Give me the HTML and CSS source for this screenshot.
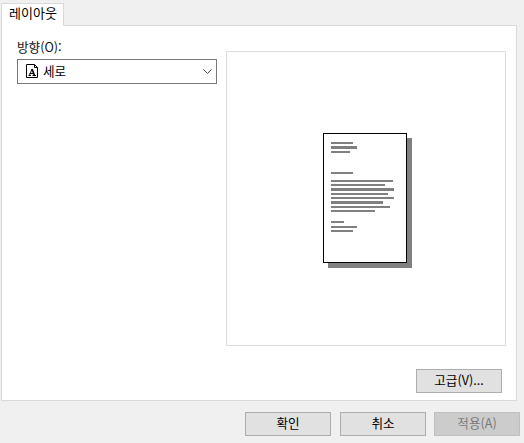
FILE: index.html
```html
<!DOCTYPE html>
<html lang="ko">
<head>
<meta charset="utf-8">
<title>레이아웃</title>
<link rel="stylesheet" href="styles.css">
</head>
<body>
<div class="dialog">
  <div class="tabs"><div class="tab">레이아웃</div></div>
  <div class="panel">
    <div class="main">
      <div class="left">
        <label class="label">방향(O):</label>
        <div class="combo">
          <svg class="doc" width="14" height="15" viewBox="0 0 14 15">
            <path d="M1.5.5H9.5L12.5 3.5V13.5H1.5Z" fill="#fff" stroke="#000"/>
            <path d="M9.5.5V3.5H12.5" fill="none" stroke="#000"/>
            <path d="M3.5 11.5H6M7.5 11.5H11M4.5 9.5H9" fill="none" stroke="#000"/>
            <path d="M4.6 11.2L7 5" fill="none" stroke="#000"/>
            <path d="M7 5L9.4 11.2" fill="none" stroke="#000" stroke-width="1.6"/>
          </svg>
          <span class="combo-text">세로</span>
          <svg class="chev" width="9" height="5" viewBox="0 0 9 5"><path d="M.4.4L4.5 4.4L8.6.4" fill="none" stroke="#444" stroke-width="1"/></svg>
        </div>
      </div>
      <div class="preview">
        <svg width="90" height="136" viewBox="0 0 90 136" shape-rendering="crispEdges">
          <rect x="5" y="5" width="84" height="130" fill="#808080"/>
          <rect x="0.5" y="0.5" width="83" height="129" fill="#fff" stroke="#000"/>
          <g fill="#808080">
            <rect x="8" y="9" width="22" height="2"/>
            <rect x="8" y="13" width="26" height="3"/>
            <rect x="8" y="18" width="19" height="2"/>
            <rect x="8" y="39" width="22" height="2"/>
            <rect x="8" y="47" width="62" height="2"/>
            <rect x="8" y="51" width="54" height="2"/>
            <rect x="8" y="55" width="63" height="3"/>
            <rect x="8" y="60" width="57" height="2"/>
            <rect x="8" y="64" width="63" height="2"/>
            <rect x="8" y="68" width="52" height="3"/>
            <rect x="8" y="73" width="59" height="2"/>
            <rect x="8" y="77" width="44" height="2"/>
            <rect x="8" y="88" width="13" height="2"/>
            <rect x="8" y="93" width="26" height="2"/>
            <rect x="8" y="97" width="22" height="2"/>
          </g>
        </svg>
      </div>
    </div>
    <div class="panel-actions"><button class="btn">고급(V)...</button></div>
  </div>
  <div class="actions">
    <button class="btn">확인</button>
    <button class="btn">취소</button>
    <button class="btn disabled">적용(A)</button>
  </div>
</div>
</body>
</html>
```
FILE: styles.css
```css
html, body {
  margin: 0;
  height: 100%;
  background: #f0f0f0;
}
body {
  font-family: "Noto Sans CJK KR", "Liberation Sans", sans-serif;
  font-size: 12.6px;
  color: #000;
}
.dialog {
  width: 524px;
  height: 443px;
  padding: 3px 7px 0 1px;
  box-sizing: border-box;
  overflow: hidden;
}
.tabs {
  display: flex;
  height: 22px;
}
.tab {
  width: 63px;
  height: 23px;
  box-sizing: border-box;
  border: 1px solid #d9d9d9;
  border-bottom: 0;
  padding-left: 1px;
  background: #fff;
  text-align: center;
  font-size: 13px;
  line-height: 18px;
  position: relative;
  z-index: 1;
}
.panel {
  height: 376px;
  box-sizing: border-box;
  background: #fff;
  border: 1px solid #d9d9d9;
  padding: 14px 10px 7px 15px;
  display: flex;
  flex-direction: column;
}
.main {
  display: flex;
  gap: 9px;
}
.left {
  width: 200px;
}
.label {
  display: block;
  height: 19px;
  line-height: 14px;
  color: #111;
}
.combo {
  height: 25px;
  box-sizing: border-box;
  border: 1px solid #7a7a7a;
  display: flex;
  align-items: center;
  padding: 0 4px 0 7px;
  background: #fff;
}
.doc {
  flex: none;
}
.combo-text {
  margin-left: 4px;
  padding-bottom: 2px;
  flex: 1;
  font-size: 12.6px;
}
.chev {
  flex: none;
}
.preview {
  width: 280px;
  height: 295px;
  margin-top: 11px;
  box-sizing: border-box;
  border: 1px solid #dcdcdc;
  padding: 81px 0 0 96px;
}
.preview svg {
  display: block;
}
.panel-actions {
  margin-top: auto;
  display: flex;
  justify-content: flex-end;
  padding-right: 4px;
}
.btn {
  width: 86px;
  height: 24px;
  box-sizing: border-box;
  border: 1px solid #adadad;
  background: #e1e1e1;
  font: inherit;
  color: #000;
  padding: 0 0 2px;
  line-height: 18px;
}
.actions {
  display: flex;
  margin-top: 11px;
  padding-left: 244px;
  gap: 9px;
  margin-right: -4px;
}
.actions .btn:last-child {
  margin-left: -1px;
}
.btn.disabled {
  background: #cccccc;
  border-color: #bfbfbf;
  color: #7a7a7a;
}
```
